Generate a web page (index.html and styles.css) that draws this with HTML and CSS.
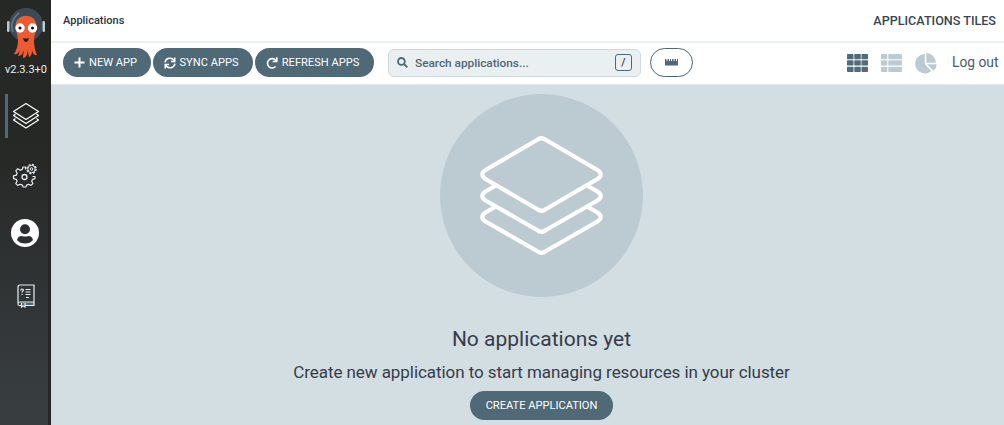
FILE: index.html
```html
<!DOCTYPE html>
<html lang="en">
<head>
<meta charset="utf-8">
<title>Applications</title>
<link rel="stylesheet" href="styles.css">
</head>
<body>
<div class="app">
  <nav class="sidebar">
    <svg class="logo" width="40" height="52" viewBox="0 0 40 52">
      <circle cx="20" cy="18" r="17" fill="#3b4b56"/>
      <path d="M7 25Q3 14 13 6" fill="none" stroke="#607d8b" stroke-width="1.600"/>
      <rect x="1" y="14" width="2.500" height="11" rx="1.200" fill="#b9ccd4"/><rect x="36.500" y="14" width="2.500" height="11" rx="1.200" fill="#b9ccd4"/>
      <path d="M9.500 20C8.500 5 31.500 5 30.500 20C30 25 28 29 28 33Q28 42 31 48Q27 49 26 43Q26 49 23 50Q22 47 22 43Q21 51 17 51Q17 48 18 43Q16 49 12 49Q13 47 14 43Q12 48 8 47Q12 41 12 33C12 29 10 25 9.500 20Z" fill="#ee5b32"/>
      <circle cx="14" cy="21" r="4.700" fill="#fff"/><circle cx="26.500" cy="21" r="4.700" fill="#fff"/>
      <circle cx="14" cy="21" r="1.500" fill="#111"/><circle cx="26.500" cy="21" r="1.500" fill="#111"/>
      <path d="M17 31Q20 32 23 31Q22 35 20 35Q18 35 17 31Z" fill="#201a18"/>
    </svg>
    <div class="version">v2.3.3+0</div>
    <a class="nav-item nav-item--active">
      <svg width="28" height="28" viewBox="0 0 28 28" fill="none" stroke="#fff" stroke-width="1.200" stroke-linejoin="round"><path d="M14 1.500L26.500 9.500L14 17.500L1.500 9.500ZM3.500 12L1.500 13.500L14 21.500L26.500 13.500L24.500 12M3.500 16.500L1.500 18L14 26L26.500 18L24.500 16.500"/></svg>
    </a>
    <a class="nav-item nav-item--gears">
      <svg width="26" height="26" viewBox="0 0 26 26" fill="none" stroke="#e8eff2" stroke-linejoin="round">
        <path stroke-width="1.200" d="M13.500 7.500V5H11L10.300 7.400L8.200 8.300L5.800 6.700L3.800 8.800L5.100 11.200L4.300 13.200L1.500 13.800V16.600L4.300 17.300L5.100 19.300L3.800 21.600L5.800 23.400L8.200 22.300L10.300 23.100L11.200 25H13.800L14.700 23.100L16.600 22.300L19 23.400L20.900 21.600L19.700 19.300L20.500 17.300L23 16.600V14.500H20.500"/>
        <circle cx="12.500" cy="15" r="2.500" stroke-width="1.300"/>
        <circle cx="19.500" cy="7" r="4.600" stroke-width="1.300" stroke-dasharray="2 1.600"/><circle cx="19.500" cy="7" r="3.700"/><circle cx="19.500" cy="7" r="1.300"/>
      </svg>
    </a>
    <a class="nav-item nav-item--user">
      <svg width="28" height="28" viewBox="0 0 28 28"><circle cx="14" cy="14" r="14" fill="#fff"/><circle cx="14" cy="10.300" r="5" fill="#2c3032"/><path d="M6 21Q7 17 10.500 17Q14 18.200 17.500 17Q21 17 22 21Q19 24.500 14 24.500Q9 24.500 6 21Z" fill="#2c3032"/></svg>
    </a>
    <a class="nav-item nav-item--docs">
      <svg width="18" height="24" viewBox="0 0 18 24" fill="none" stroke="#e8eff2" stroke-width="1.200"><path d="M4 18.500H17V21.500H4Z" fill="#536b79" stroke="none"/><path d="M3 1H17V21.500H8M4 21.500H2.500Q1 21.500 1 20V3Q1 1 3 1M1 19.500Q1 18 3 18H17"/><path d="M4.500 19V23L6.200 22L8 23V19"/><path stroke-width="1.100" d="M3.700 6.500Q3.700 5 5 5Q6.700 5 6.300 6.500Q5 7.300 5 8.500M5 9.700V11M8.500 5.500H13.500M8.500 8H13.500M8.500 10.500H13.500M9 13.500H12"/></svg>
    </a>
  </nav>
  <main class="page">
    <header class="topbar"><span class="crumb">Applications</span><span class="title">APPLICATIONS TILES</span></header>
    <div class="toolbar">
      <button class="btn btn--tool btn--new"><svg width="11" height="11" viewBox="0 0 11 11"><path d="M5.500.5V10.500M.5 5.500H10.500" stroke="#fff" stroke-width="2"/></svg><span>NEW APP</span></button>
      <button class="btn btn--tool btn--sync"><svg width="12" height="12" viewBox="0 0 12 12" fill="none" stroke="#fff" stroke-width="1.500"><path d="M1 5.300A5 5 0 0 1 10 3.300M11 6.700A5 5 0 0 1 2 8.700M10.800.5V4.500H7M1.200 11.500V7.500H5"/></svg><span>SYNC APPS</span></button>
      <button class="btn btn--tool btn--refresh"><svg width="12" height="12" viewBox="0 0 12 12" fill="none" stroke="#fff" stroke-width="1.600"><path d="M9.800 3.300A4.700 4.700 0 1 0 9.600 9.500M10.800.3V4.500H6.700"/></svg><span>REFRESH APPS</span></button>
      <div class="search">
        <svg width="11" height="11" viewBox="0 0 11 11" fill="none" stroke="#4f6676" stroke-width="1.800"><circle cx="4.400" cy="4.400" r="3.400"/><path d="M7 7L10.300 10.300"/></svg>
        <span class="placeholder">Search applications...</span><span class="key">/</span>
      </div>
      <button class="ruler"><svg width="13" height="7" viewBox="0 0 13 7"><path d="M0 0H1.500V2H2.500V0H4V2H5V0H6V2H7V0H8.500V2H9.500V0H11V2H12V0H13V6.500H0Z" fill="#4f6a79"/></svg></button>
      <div class="views">
        <svg width="21" height="18" viewBox="0 0 21 18" fill="#506b79"><rect width="6.500" height="5.300" rx=".7"/><rect x="7.300" width="6.500" height="5.300" rx=".7"/><rect x="14.500" width="6.500" height="5.300" rx=".7"/><rect y="6.300" width="6.500" height="5.300" rx=".7"/><rect x="7.300" y="6.300" width="6.500" height="5.300" rx=".7"/><rect x="14.500" y="6.300" width="6.500" height="5.300" rx=".7"/><rect y="12.700" width="6.500" height="5.300" rx=".7"/><rect x="7.300" y="12.700" width="6.500" height="5.300" rx=".7"/><rect x="14.500" y="12.700" width="6.500" height="5.300" rx=".7"/></svg>
        <svg width="21" height="18" viewBox="0 0 21 18" fill="#bccbd3"><rect width="6.300" height="5.300" rx=".7"/><rect x="7.300" width="13.700" height="5.300" rx=".7"/><rect y="6.300" width="6.300" height="5.300" rx=".7"/><rect x="7.300" y="6.300" width="13.700" height="5.300" rx=".7"/><rect y="12.700" width="6.300" height="5.300" rx=".7"/><rect x="7.300" y="12.700" width="13.700" height="5.300" rx=".7"/></svg>
        <svg width="22" height="21" viewBox="0 0 22 21" fill="#bccbd3"><path d="M9.800 1V11L16.300 18A9.700 9.700 0 1 1 9.800 1Z"/><path d="M11.300 0A10 10 0 0 1 21 9.800H11.300Z"/><path d="M12 11.200H21.700A9 9 0 0 1 18.500 17.800Z"/></svg>
      </div>
      <a class="logout">Log out</a>
    </div>
    <section class="empty">
      <div class="badge">
        <svg width="203" height="203" viewBox="0 0 203 203" fill="none" stroke="#fff" stroke-width="4.200" stroke-linejoin="round">
          <path d="M97 46Q101.500 42.500 106 46L157.500 76Q164 80.500 157.500 85L106 115Q101.500 118.500 97 115L45.500 85Q39 80.500 45.500 76Z"/>
          <path d="M56 91.500L45.500 97.500Q39 102 45.500 106.500L97 136Q101.500 139.500 106 136L157.500 106.500Q164 102 157.500 97.500L147 91.500"/>
          <path d="M56 112.500L45.500 118.500Q39 123 45.500 127.500L97 157Q101.500 160.500 106 157L157.500 127.500Q164 123 157.500 118.500L147 112.500"/>
        </svg>
      </div>
      <h1 class="headline">No applications yet</h1>
      <p class="hint">Create new application to start managing resources in your cluster</p>
      <button class="btn btn--create">CREATE APPLICATION</button>
    </section>
  </main>
</div>
</body>
</html>
```
FILE: styles.css
```css
* { box-sizing: border-box; }
body { margin: 0; font-family: Roboto, sans-serif; color: #363c4a; }
button { font: inherit; padding: 0; border: 0; }
svg { display: block; flex: none; }
.app { display: flex; width: 1004px; height: 425px; overflow: hidden; }
.sidebar { width: 51px; flex: none; display: flex; flex-direction: column; align-items: center; padding-top: 7px; background: linear-gradient(#262826 0, #262826 145px, #383d40 405px); border-right: 3px solid #262826; }
.logo { margin-left: 4px; }
.version { margin: 4px 0 0 4px; height: 14px; line-height: 14px; font-size: 11px; color: #e8eff2; white-space: nowrap; }
.nav-item { display: flex; align-items: center; justify-content: center; width: 100%; height: 44px; margin-top: 17px; padding-left: 2px; }
.nav-item--active { width: 43px; align-self: flex-end; padding: 0 5px 0 0; border-left: 3px solid #536b79; }
.nav-item--gears { margin-top: 15px; }
.nav-item--user { margin-top: 14px; }
.nav-item--docs { margin-top: 19px; padding-left: 3px; }
.page { flex: 1; display: flex; flex-direction: column; min-width: 0; background: #fff; }
.topbar { height: 43px; flex: none; display: flex; justify-content: space-between; align-items: center; padding: 0 8px 1px 12px; border-bottom: 2px solid #ebf0f2; }
.crumb { font-size: 11px; font-weight: 500; color: #2b3340; }
.title { font-size: 12.6px; font-weight: 500; color: #394551; }
.toolbar { height: 41px; flex: none; display: flex; align-items: center; padding: 0 6px 2px 12px; }
.btn { display: flex; flex: none; align-items: center; justify-content: center; height: 29px; border-radius: 15px; background: #4f6977; color: #fff; font-size: 11px; white-space: nowrap; }
.btn svg { margin-right: 4px; }
.btn--tool { padding-right: 4px; font-size: 11.1px; }
.btn--new { width: 88px; padding-right: 3px; }
.btn--sync { width: 100px; margin-left: 2px; }
.btn--refresh { width: 119px; margin-left: 2px; }
.search { display: flex; align-items: center; width: 253px; height: 28px; margin-left: 14px; padding: 0 8px; border: 1px solid #ccd9de; border-radius: 6px; background: #eaeff1; }
.placeholder { flex: 1; margin-left: 7px; font-size: 11.8px; font-weight: 500; color: #4f6676; }
.key { width: 17px; height: 17px; line-height: 15px; border: 1px solid #4f6676; border-radius: 3px; font-size: 11px; font-weight: 500; text-align: center; }
.ruler { display: flex; align-items: center; justify-content: center; width: 43px; height: 29px; margin-left: 9px; border: 1px solid #4f6676; border-radius: 15px; background: #fff; }
.views { display: flex; align-items: center; gap: 13px; margin-left: auto; padding-top: 1px; }
.logout { width: 46px; margin-left: 15px; padding-bottom: 1px; font-size: 13.8px; white-space: nowrap; color: #4b5a68; }
.empty { flex: 1; display: flex; flex-direction: column; align-items: center; padding: 9px 0 0 28px; background: #d3dee3; border-top: 1px solid #e1e9ec; }
.badge { width: 203px; height: 203px; flex: none; border-radius: 50%; background: #bccad2; }
.headline { margin: 28px 0 0; height: 28px; line-height: 28px; font-size: 21px; font-weight: 400; }
.hint { margin: 8px 0 0; height: 22px; line-height: 22px; font-size: 17px; letter-spacing: -0.06px; white-space: nowrap; }
.btn--create { width: 143px; margin-top: 8px; font-size: 11.1px; }
```
